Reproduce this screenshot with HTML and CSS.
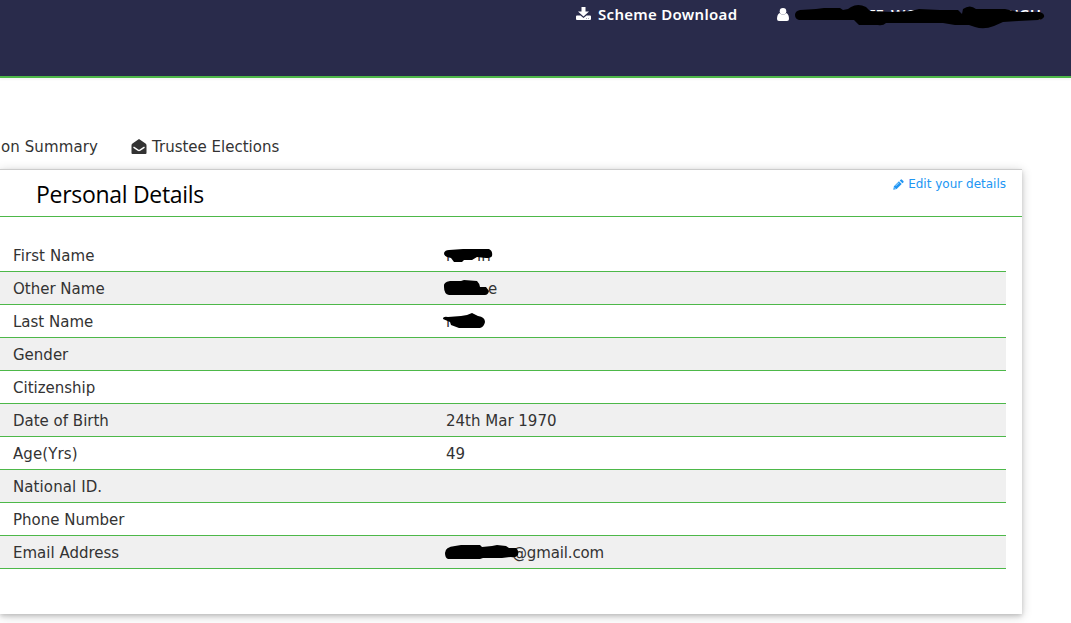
FILE: index.html
```html
<!DOCTYPE html>
<html lang="en">
<head>
<meta charset="utf-8">
<title>Personal Details</title>
<link rel="stylesheet" href="styles.css">
</head>
<body>
<header class="topbar">
  <a class="download"><svg class="icon-download" width="15" height="14" viewBox="0 0 15 14"><path fill="currentColor" d="M5.500 0h4v4.500h3.500L7.500 9.500 2 4.500h3.500zM1 8.500h3.500l3 2.500 3-2.500H14q1 0 1 1V12q0 1-1 1H1q-1 0-1-1V9.500q0-1 1-1z"/><path fill="#aaabb9" d="M10 11h1v1h-1zm2 0h1v1h-1z"/></svg><span>Scheme Download</span></a>
  <a class="account"><svg class="icon-user" width="12" height="13" viewBox="0 0 12 13"><circle cx="6" cy="3.300" r="3.300" fill="currentColor"/><path fill="currentColor" d="M2.500 5Q6 8 9.500 5 12 6.500 12 11q0 2-2 2H2q-2 0-2-2Q0 6.500 2.500 5z"/></svg>
  <svg class="redaction" width="252" height="30" viewBox="794 0 252 30"><g class="account-text"><text x="799" y="20">S</text><text x="838" y="20">E</text><text x="870" y="20">IE</text><text x="891" y="20">WO</text><text x="1007" y="20">NGH</text></g><path d="M795 15Q795 11 800 10L816 9 824 8 840 8 843 10 848 9 851 7Q858 3 866 7L870 11 892 12 911 11 919 9 940 10 958 10 962 14 963 9Q970 4 976 9L1005 9 1018 12 1040 12Q1045 14 1044 17 1042 20 1038 20L1018 21 1003 22 994 26Q984 30 975 27L969 25 955 25 943 23 920 23 886 23Q883 26 878 25L859 25 854 20 825 20 812 20 799 20Q795 19 795 15z"/></svg></a>
</header>
<nav class="tabs"><a class="summary">on Summary</a><a class="elections"><svg width="16" height="16" viewBox="0 0 16 16"><path fill="#333" d="M8 0 14.500 4.500Q15.500 5 15.500 6.500V14q0 1-1 1H1.500q-1 0-1-1V6.500Q.5 5 1.500 4.500z"/><path fill="none" stroke="#fff" stroke-width="1.400" d="M2.500 8.200 7 11.200q1 .7 2 0l4.500-3"/></svg><span>Trustee Elections</span></a></nav>
<main class="card">
  <div class="card-head"><h1>Personal Details</h1><a class="edit"><svg width="11" height="11" viewBox="0 0 12 12"><path fill="currentColor" d="M8.300.7q.7-.7 1.500 0l1.500 1.500q.7.7 0 1.500l-1 1-3-3zM6.500 2.500l3 3L4 11l-3.700.7L1 8z"/><path stroke="#fff" stroke-width=".7" d="M3 7.500 6.500 4M1.200 9.200l1.600 1.600"/></svg><span>Edit your details</span></a></div>
  <div class="details">
    <div class="row"><span class="label wide">First Name</span><span class="value"><svg class="scribble" width="52" height="18" viewBox="443 246 52 18"><g><text x="446" y="261">r</text><text x="477" y="261">in</text></g><path d="M444 253Q445 250 449 250L463 249 489 249Q493 251 492 256 491 258 486 258L477 257 472 260 464 260 462 262 454 262 451 258 447 257Q444 256 444 253z"/></svg></span></div>
    <div class="row"><span class="label">Other Name</span><span class="value"><svg class="scribble" width="46" height="18" viewBox="443 279 46 18"><path d="M444 287Q443 282 450 281L461 281 464 280 477 281Q480 284 480 287L486 287 489 291Q488 295 485 295L449 295Q444 294 444 287z"/></svg><span class="tail-e">e</span></span></div>
    <div class="row"><span class="label">Last Name</span><span class="value"><svg class="scribble" width="44" height="18" viewBox="443 312 44 18"><g><text x="446" y="327">r</text></g><path d="M443 319Q443 316 448 317L461 316 467 315 472 313 478 316Q485 317 485 322 484 327 480 328L459 328 451 325 450 322z"/></svg></span></div>
    <div class="row"><span class="label">Gender</span></div>
    <div class="row"><span class="label">Citizenship</span></div>
    <div class="row"><span class="label">Date of Birth</span><span class="value">24th Mar 1970</span></div>
    <div class="row"><span class="label wide">Age(Yrs)</span><span class="value">49</span></div>
    <div class="row"><span class="label wide">National ID.</span></div>
    <div class="row"><span class="label">Phone Number</span></div>
    <div class="row"><span class="label">Email Address</span><span class="value"><svg class="scribble" width="76" height="18" viewBox="443 543 76 18"><path d="M445 553Q445 547 455 546L461 545 480 545 482 547 492 546 497 545 506 546 509 548 516 548Q519 550 518 555 516 558 511 557L502 558 483 558 480 559 448 559Q445 558 445 553z"/></svg><span class="tail-mail">@gmail.com</span></span></div>
  </div>
</main>
</body>
</html>
```
FILE: styles.css
```css
* { box-sizing: border-box; }
body { margin: 0; height: 623px; overflow: hidden; background: #fff; color: #333; font: 15px/20px "DejaVu Sans", sans-serif; }
svg { display: block; flex: none; }
.topbar { height: 78px; display: flex; background: #292b4b; border-bottom: 2px solid #4db849; color: #fff; padding-left: 576px; box-shadow: 0 2px 2px #f7f7f7; font: 600 15px/20px "Noto Sans", sans-serif; }
.download { display: flex; width: 201px; height: 30px; padding-top: 4px; gap: 7px; white-space: nowrap; letter-spacing: .3px; }
.icon-download { margin-top: 3px; }
.account { display: flex; gap: 5px; height: 30px; }
.icon-user { margin-top: 8px; }
.account-text { fill: #fff; }
.tabs { height: 91px; padding-top: 59px; display: flex; }
.summary { width: 131px; padding-left: 1px; letter-spacing: .1px; }
.elections { display: flex; gap: 5px; }
.elections svg { margin-top: 2px; }
.card { width: 1022px; height: 445px; border-top: 1px solid #ccc; box-shadow: 0 2px 10px rgba(0,0,0,.2), 0 2px 4px rgba(0,0,0,.14); background: #fff; }
.card-head { height: 47px; display: flex; justify-content: space-between; padding: 8px 16px 0 36px; border-bottom: 1px solid #4db849; }
h1 { margin: 0; font: 400 23px/32px "Open Sans", sans-serif; letter-spacing: -.3px; color: #000; }
.edit { display: flex; gap: 4px; font-size: 12px; line-height: 12px; color: #2196f3; }
.edit svg { margin-top: 1px; }
.details { width: 1006px; padding-top: 22px; }
.row { height: 33px; display: flex; align-items: center; border-bottom: 1px solid #4db849; padding: 2px 0 0 13px; }
.row:nth-child(even) { background: #f0f0f0; }
.label { width: 433px; }
.wide { letter-spacing: .1px; }
.value { display: flex; align-items: center; }
.scribble { margin: 0 0 2px -3px; }
.scribble g { fill: #333; }
.tail-e { margin-left: -1px; }
.tail-mail { margin-left: -7px; letter-spacing: -.15px; }
.value .scribble { position: relative; z-index: 1; }
```
